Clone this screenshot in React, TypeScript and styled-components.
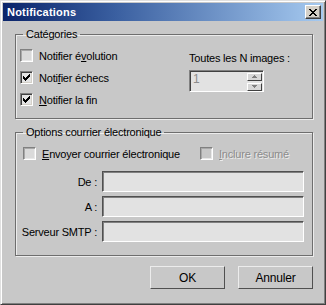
import React from 'react';
import styled, { createGlobalStyle } from 'styled-components';

const GlobalStyle = createGlobalStyle`
  html, body {
    margin: 0;
    padding: 0;
    background: #c8c8c8;
  }
  body {
    font-family: 'Liberation Sans', Arial, sans-serif;
    font-size: 11px;
    letter-spacing: -0.2px;
    color: #000;
  }
`;

const Window = styled.div`
  box-sizing: border-box;
  width: 326px;
  height: 305px;
  background: #c8c8c8;
  border: 1px solid;
  border-color: #e0e0e0 #404040 #404040 #e0e0e0;
  box-shadow: inset 1px 1px 0 #ffffff, inset -1px -1px 0 #808080;
  padding: 2px;
  display: flex;
  flex-direction: column;
`;

const TitleBar = styled.div`
  height: 18px;
  flex: none;
  display: flex;
  align-items: center;
  justify-content: space-between;
  padding: 0 2px 0 4px;
  background: linear-gradient(to right, #0a246a, #3a5fa0 35%, #a6caf0);
`;

const Title = styled.span`
  color: #fff;
  font-weight: bold;
  font-size: 11px;
  letter-spacing: 0.2px;
`;

const CloseButton = styled.div`
  box-sizing: border-box;
  width: 16px;
  height: 14px;
  background: #d4d0c8;
  border: 1px solid;
  border-color: #ffffff #404040 #404040 #ffffff;
  box-shadow: inset -1px -1px 0 #808080;
  display: flex;
  align-items: center;
  justify-content: center;
`;

const Body = styled.div`
  flex: 1;
  display: flex;
  flex-direction: column;
  padding: 7px 10px 0 12px;
`;

const Group = styled.fieldset<{ $height: number; $top?: number }>`
  margin: ${(p) => p.$top ?? 0}px 0 0 0;
  height: ${(p) => p.$height}px;
  box-sizing: border-box;
  border: 1px solid #6e6e6e;
  box-shadow: 1px 1px 0 #ececec, inset 1px 1px 0 #ececec;
  padding: 9px 4px 0 4px;
  min-width: 0;
`;

const Legend = styled.legend`
  padding: 0 3px;
  margin-left: 3px;
  font-size: 11px;
  line-height: 12px;
`;

const CatRow = styled.div`
  display: flex;
`;

const CheckColumn = styled.div`
  width: 169px;
  display: flex;
  flex-direction: column;
  gap: 9px;
`;

const CheckItem = styled.label<{ $disabled?: boolean }>`
  display: flex;
  align-items: center;
  gap: 6px;
  height: 13px;
  color: ${(p) => (p.$disabled ? '#8c8c8c' : '#000')};
  text-shadow: ${(p) => (p.$disabled ? '1px 1px 0 #ececec' : 'none')};
  white-space: nowrap;
`;

const Box = styled.span<{ $disabled?: boolean; $checked?: boolean }>`
  box-sizing: border-box;
  width: 13px;
  height: 13px;
  flex: none;
  background: ${(p) => (p.$disabled ? '#c8c8c8' : p.$checked ? '#e4e4e4' : '#dadada')};
  border: 1px solid;
  border-color: #808080 #ffffff #ffffff #808080;
  box-shadow: ${(p) =>
    p.$checked
      ? 'inset 1px 1px 0 #404040, inset -1px -1px 0 #d4d0c8'
      : 'inset 1px 1px 0 #a8a8a8, inset -1px -1px 0 #e8e8e8'};
  display: flex;
  align-items: center;
  justify-content: center;
`;

const U = styled.span`
  text-decoration: underline;
`;

const SpinColumn = styled.div`
  display: flex;
  flex-direction: column;
  gap: 5px;
  padding-top: 3px;
`;

const SpinLabel = styled.span`
  line-height: 13px;
`;

const Spinner = styled.div`
  box-sizing: border-box;
  width: 75px;
  height: 22px;
  background: #e2e2e2;
  border: 1px solid;
  border-color: #808080 #ffffff #ffffff #808080;
  box-shadow: inset 1px 1px 0 #404040;
  display: flex;
  align-items: center;
  padding: 1px 1px 0 3px;
`;

const SpinValue = styled.span`
  flex: 1;
  align-self: flex-start;
  color: #8c8c8c;
  font-size: 12px;
  line-height: 14px;
`;

const SpinButtons = styled.div`
  display: flex;
  flex-direction: column;
  gap: 2px;
`;

const SpinButton = styled.div`
  box-sizing: border-box;
  width: 15px;
  height: 8px;
  background: #d8d8d8;
  border: 1px solid;
  border-color: #ffffff #404040 #404040 #ffffff;
  display: flex;
  align-items: center;
  justify-content: center;
`;

const MailChecks = styled.div`
  display: grid;
  grid-template-columns: 177px auto;
  padding-left: 3px;
`;

const Fields = styled.div`
  display: grid;
  grid-template-columns: 77px 202px;
  column-gap: 5px;
  row-gap: 4px;
  margin-top: 11px;
`;

const FieldLabel = styled.span`
  text-align: right;
  align-self: center;
  white-space: nowrap;
`;

const Input = styled.div`
  box-sizing: border-box;
  height: 21px;
  background: #e2e2e2;
  border: 1px solid;
  border-color: #505050 #ffffff #ffffff #505050;
  box-shadow: inset 1px 1px 0 #808080;
`;

const ButtonRow = styled.div`
  display: flex;
  justify-content: flex-end;
  gap: 13px;
  margin-top: 10px;
`;

const Button = styled.div`
  box-sizing: border-box;
  width: 75px;
  height: 23px;
  border: 1px solid;
  border-color: #ececec #505050 #505050 #ececec;
  display: flex;
  align-items: center;
  justify-content: center;
  font-size: 12px;
`;

const Check = () => (
  <svg width="7" height="7" viewBox="0 0 7 7">
    <path d="M0 2h1v1h1v1h1V3h1V2h1V1h1V0h1v3H6v1H5v1H4v1H3v1H2V6H1V5H0z" fill="#000" />
  </svg>
);

const Arrow = ({ up }: { up?: boolean }) => (
  <svg width="5" height="3" viewBox="0 0 5 3">
    <path d={up ? 'M2 0h1v1h1v1h1v1H0V2h1V1h1z' : 'M0 0h5v1H4v1H3v1H2V2H1V1H0z'} fill="#808080" />
  </svg>
);

const CheckBox = ({
  checked,
  disabled,
  children,
}: {
  checked?: boolean;
  disabled?: boolean;
  children: React.ReactNode;
}) => (
  <CheckItem $disabled={disabled}>
    <Box $disabled={disabled} $checked={checked}>
      {checked && <Check />}
    </Box>
    <span>{children}</span>
  </CheckItem>
);

export default function App() {
  return (
    <>
      <GlobalStyle />
      <Window>
        <TitleBar>
          <Title>Notifications</Title>
          <CloseButton>
            <svg width="8" height="7" viewBox="0 0 8 7">
              <path d="M0 0h2v1h1v1h2V1h1V0h2v1H7v1H6v1H5v1h1v1h1v1h1v1H6V6H5V5H3v1H2v1H0V6h1V5h1V4h1V3H2V2H1V1H0z" fill="#000" />
            </svg>
          </CloseButton>
        </TitleBar>
        <Body>
          <Group $height={91}>
            <Legend>Catégories</Legend>
            <CatRow>
              <CheckColumn>
                <CheckBox>
                  Notifier é<U>v</U>olution
                </CheckBox>
                <CheckBox checked>
                  Noti<U>f</U>ier échecs
                </CheckBox>
                <CheckBox checked>
                  <U>N</U>otifier la fin
                </CheckBox>
              </CheckColumn>
              <SpinColumn>
                <SpinLabel>Toutes les N images :</SpinLabel>
                <Spinner>
                  <SpinValue>1</SpinValue>
                  <SpinButtons>
                    <SpinButton>
                      <Arrow up />
                    </SpinButton>
                    <SpinButton>
                      <Arrow />
                    </SpinButton>
                  </SpinButtons>
                </Spinner>
              </SpinColumn>
            </CatRow>
          </Group>
          <Group $height={130} $top={7}>
            <Legend>Options courrier électronique</Legend>
            <MailChecks>
              <CheckBox>
                <U>E</U>nvoyer courrier électronique
              </CheckBox>
              <CheckBox disabled>
                <U>I</U>nclure résumé
              </CheckBox>
            </MailChecks>
            <Fields>
              <FieldLabel>De :</FieldLabel>
              <Input />
              <FieldLabel>A :</FieldLabel>
              <Input />
              <FieldLabel>Serveur SMTP :</FieldLabel>
              <Input />
            </Fields>
          </Group>
          <ButtonRow>
            <Button>OK</Button>
            <Button>Annuler</Button>
          </ButtonRow>
        </Body>
      </Window>
    </>
  );
}
